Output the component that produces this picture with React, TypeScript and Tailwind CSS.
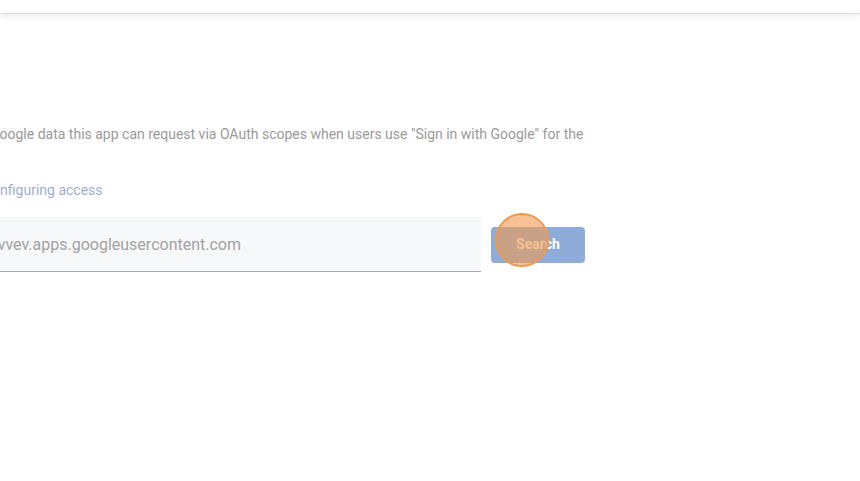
import React from "react";

export default function App() {
  return (
    <div
      className="relative w-[860px] h-[481px] overflow-hidden bg-white"
      style={{ fontFamily: "Roboto, 'Liberation Sans', sans-serif" }}
    >
      {/* Top bar */}
      <div className="h-[14px] bg-white border-b border-[#dcdcdc] shadow-[0_2px_6px_rgba(0,0,0,0.08)]" />

      <div className="flex flex-col">
        <p className="mt-[111px] -ml-[10px] text-[14px] leading-[18px] text-[#9a9a9a] whitespace-nowrap">
          Google data this app can request via OAuth scopes when users use "Sign in with Google" for the
        </p>

        <a className="mt-[38px] -ml-[17px] text-[14px] leading-[18px] text-[#9fadd6] whitespace-nowrap">
          Configuring access
        </a>

        <div className="mt-[18px] flex items-center gap-[10px]">
          <div className="w-[481px] h-[55px] bg-[#f7f8fa] border-b border-[#a3a9bd] flex items-center justify-end overflow-hidden pr-[240px] pt-[2px]">
            <span className="text-[16px] text-[#a2a2a2] whitespace-nowrap">
              843210576-k2f9q7lmb8xvvev.apps.googleusercontent.com
            </span>
          </div>
          <button className="relative w-[94px] h-[36px] rounded-[4px] bg-[#8eacd9] text-white text-[14px] font-bold">
            Search
            <span className="absolute left-[4px] top-[-14px] w-[54px] h-[54px] rounded-full border-2 border-[#f0994f] bg-[#f0994f]/60" />
          </button>
        </div>
      </div>
    </div>
  );
}
